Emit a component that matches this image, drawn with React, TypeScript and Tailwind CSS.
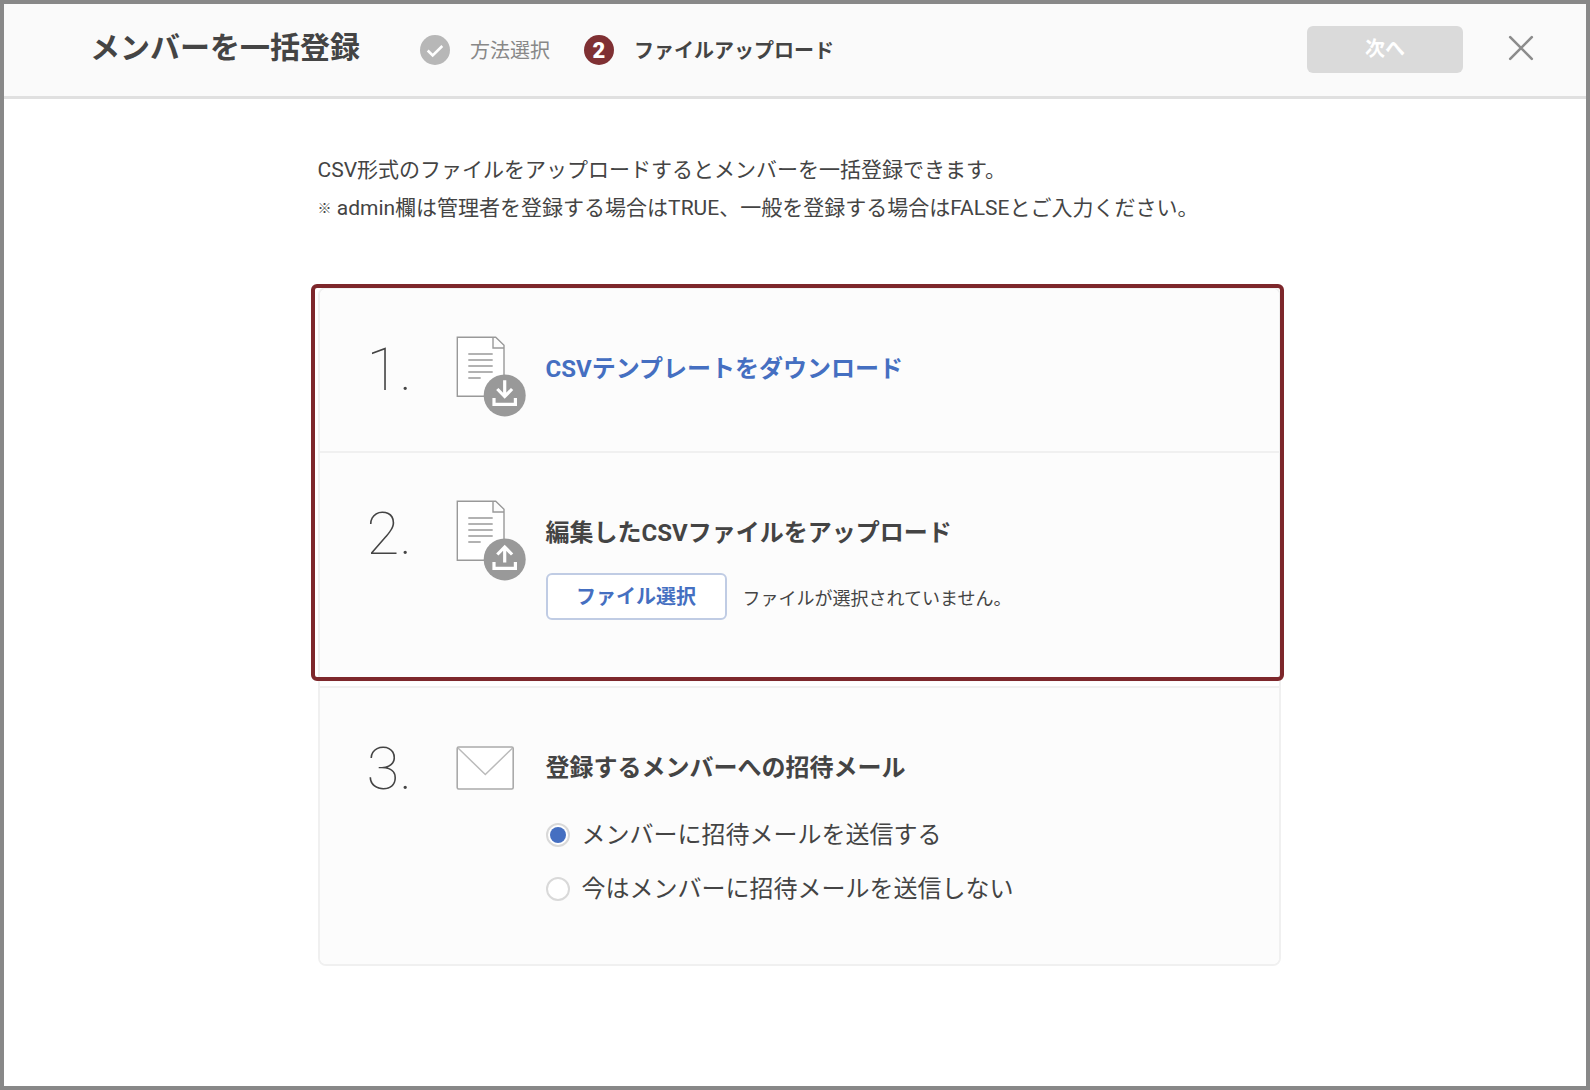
import { useRef, useState, type ReactNode } from "react";

function TransferIcon({ direction }: { direction: "down" | "up" }) {
  return (
    <svg viewBox="0 0 70 81" className="h-[81px] w-[70px]" fill="none" aria-hidden="true">
      <path
        d="M1.3 1.3H39.7L48 9.3V60.3H1.3Z M37 1.3V12H48"
        fill="#fff"
        stroke="#999"
        strokeWidth="1.4"
      />
      <path d="M12.3 18H36.7M12.3 24H36.7M12.3 30H36.7M12.3 36H36.7M12.3 42H24.7" stroke="#999" strokeWidth="1.4" />
      <circle cx="48.7" cy="59.4" r="21" fill="#999" />
      {direction === "down" ? (
        <path d="M48.7 44.3V60M41.3 53L48.7 60.5L56.1 53" stroke="#fff" strokeWidth="3.2" />
      ) : (
        <path d="M48.7 62.5V47M41.3 54.5L48.7 47L56.1 54.5" stroke="#fff" strokeWidth="3.2" />
      )}
      <path d="M38 62V68.3H59.4V62" stroke="#fff" strokeWidth="3.2" />
    </svg>
  );
}

function MailIcon() {
  return (
    <svg viewBox="0 0 58 44" className="h-11 w-[58px]" fill="none" aria-hidden="true">
      <rect x="1.2" y="1" width="56" height="42" rx="1.5" fill="#fff" stroke="#aaa" strokeWidth="1.6" />
      <path d="M2 2L29.3 28.5L56.6 2" stroke="#bbb" strokeWidth="1.5" />
    </svg>
  );
}

function Step({ number, icon, title, className, children }: {
  number: number;
  icon: ReactNode;
  title: ReactNode;
  className: string;
  children?: ReactNode;
}) {
  return (
    <li className={`flex bg-[#fcfcfc] pt-[47px] pr-12 pl-[47px] ${className}`}>
      <span className="w-[89px] shrink-0 font-['Roboto'] text-[60px] leading-[68px] font-thin">{number}.</span>
      <span className="flex h-[66px] w-[90px] shrink-0">{icon}</span>
      <div className="min-w-0 flex-1">
        <h2 className="text-2xl leading-[66px] font-bold">{title}</h2>
        {children}
      </div>
    </li>
  );
}

function MailOption({ label, checked, onSelect }: { label: string; checked: boolean; onSelect: () => void }) {
  return (
    <label className="flex h-[54px] items-center gap-3 text-2xl">
      <input
        type="radio"
        name="invitation"
        checked={checked}
        onChange={onSelect}
        className="grid size-6 shrink-0 appearance-none place-content-center rounded-full border-2 border-[#d9d9d9] bg-white before:size-4 before:rounded-full checked:before:bg-[#456fc1]"
      />
      {label}
    </label>
  );
}

export default function App() {
  const fileInput = useRef<HTMLInputElement>(null);
  const [fileName, setFileName] = useState("");
  const [sendMail, setSendMail] = useState(true);

  return (
    <div
      lang="ja"
      className="flex min-h-screen flex-col border-4 border-[#888] bg-white font-['Roboto','Noto_Sans_CJK_JP',sans-serif] text-[#444]"
    >
      <header className="flex h-[95px] items-center border-b-3 border-[#e0e0e0] bg-[#fafafa] pr-[52px] pl-[86px]">
        <h1 className="pb-1.5 text-[30px] font-bold">メンバーを一括登録</h1>
        <ol className="ml-[60px] flex items-center gap-[34px] text-[20px]">
          <li className="flex items-center gap-5 text-[#888]">
            <svg viewBox="0 0 30 30" className="size-[30px]" fill="none" aria-hidden="true">
              <circle cx="15" cy="15" r="15" fill="#b7b7b7" />
              <path d="M7.7 15.5L12.7 20.5L22.3 11" stroke="#fff" strokeWidth="2.6" />
            </svg>
            <span className="pt-0.5">方法選択</span>
          </li>
          <li className="flex items-center gap-5 font-bold" aria-current="step">
            <span className="flex size-[30px] items-center justify-center rounded-full bg-[#7f3033] text-[22px] font-black text-white">
              2
            </span>
            <span className="pt-0.5">ファイルアップロード</span>
          </li>
        </ol>
        <button
          type="button"
          disabled
          className="mb-0.5 ml-auto h-[47px] w-[156px] rounded-md bg-[#dadada] text-[20px] font-bold text-white"
        >
          次へ
        </button>
        <button type="button" aria-label="閉じる" className="mb-1 ml-[45px]">
          <svg viewBox="0 0 26 26" className="size-[26px]" fill="none" aria-hidden="true">
            <path d="M2.2 2.2L23.8 23.8M23.8 2.2L2.2 23.8" stroke="#8c8c8c" strokeWidth="2.6" strokeLinecap="round" />
          </svg>
        </button>
      </header>

      <main className="flex-1 px-4 pt-[52px] pb-12 pl-6">
        <div className="mx-auto max-w-[963px]">
          <p className="text-[21px] leading-[38px]">
            CSV形式のファイルをアップロードするとメンバーを一括登録できます。
            <br />
            <span className="align-[2px] text-sm leading-none">※</span>{" "}
            admin欄は管理者を登録する場合はTRUE、一般を登録する場合はFALSEとご入力ください。
          </p>

          <ol className="relative mt-[60px] rounded-lg border-2 border-[#f0f0f0]">
            <Step
              number={1}
              icon={<TransferIcon direction="down" />}
              title={
                <a href="#template" className="text-[#456fc1]">
                  CSVテンプレートをダウンロード
                </a>
              }
              className="rounded-t-md pb-[47px]"
            />
            <Step
              number={2}
              icon={<TransferIcon direction="up" />}
              title="編集したCSVファイルをアップロード"
              className="border-t-2 border-b-4 border-t-[#f0f0f0] border-b-white pb-[62px]"
            >
              <div className="mt-[7px] flex items-center gap-4">
                <button
                  type="button"
                  onClick={() => fileInput.current?.click()}
                  className="h-[47px] w-[181px] rounded-md border-2 border-[#c0cce4] bg-white text-[20px] font-bold text-[#456fc1]"
                >
                  ファイル選択
                </button>
                <input
                  ref={fileInput}
                  type="file"
                  accept=".csv"
                  aria-label="CSVファイル"
                  className="hidden"
                  onChange={(e) => setFileName(e.target.files?.[0]?.name ?? "")}
                />
                <span className="pt-1 text-lg">{fileName || "ファイルが選択されていません。"}</span>
              </div>
            </Step>
            <Step
              number={3}
              icon={
                <span className="flex items-center">
                  <MailIcon />
                </span>
              }
              title="登録するメンバーへの招待メール"
              className="rounded-b-md border-t-2 border-[#f0f0f0] pb-12"
            >
              <div role="radiogroup" aria-label="招待メール" className="mt-[7px]">
                <MailOption label="メンバーに招待メールを送信する" checked={sendMail} onSelect={() => setSendMail(true)} />
                <MailOption
                  label="今はメンバーに招待メールを送信しない"
                  checked={!sendMail}
                  onSelect={() => setSendMail(false)}
                />
              </div>
            </Step>
            <li
              aria-hidden="true"
              className="pointer-events-none absolute -top-[5px] -right-[5px] -left-[9px] h-[397px] rounded-md border-4 border-[#7d272b]"
            />
          </ol>
        </div>
      </main>
    </div>
  );
}
